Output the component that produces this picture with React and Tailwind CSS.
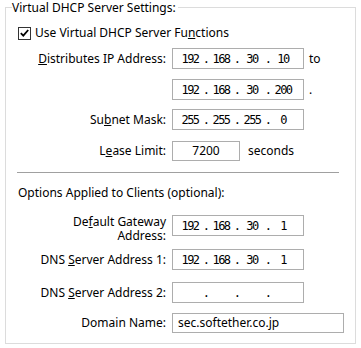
import React from "react";

const font = { fontFamily: '"Noto Sans", "Open Sans", sans-serif' };

const IpBox = ({ parts }) => (
  <div className="flex h-[21px] w-[132px] items-center border border-[#adadad] bg-white pl-[5px] font-['DejaVu_Sans_Mono',monospace] text-[12px] tracking-[-1.5px] text-black">
    {parts.map((p, i) => (
      <React.Fragment key={i}>
        <span className="w-[24px] text-center">{p}</span>
        {i < 3 && <span className="w-[7px] text-center">.</span>}
      </React.Fragment>
    ))}
  </div>
);

const Label = ({ children, className = "" }) => (
  <div className={`w-[160px] text-right leading-[14px] ${className}`}>{children}</div>
);

export default function App() {
  return (
    <div className="h-[348px] w-[361px] bg-white text-[12px] text-black" style={font}>
      <fieldset className="ml-[5px] w-[351px] border border-[#dcdcdc] px-0 pb-[10px]">
        <legend className="ml-[6px] pr-[2px] leading-[15px]">Virtual DHCP Server Settings:</legend>

        <div className="ml-[12px] mt-[11px] flex h-[14px] items-center gap-[4px]">
          <div className="flex h-[13px] w-[13px] items-center justify-center border border-[#333333] bg-white">
            <svg width="9" height="8" viewBox="0 0 9 8">
              <path d="M0.8 4.2 L3.3 6.6 L8.2 1" fill="none" stroke="#000" strokeWidth="1.8" />
            </svg>
          </div>
          <span className="leading-[14px]">
            Use Virtual DHCP Server Fu<u>n</u>ctions
          </span>
        </div>

        <div className="mt-[8px] flex items-center gap-[6px]">
          <Label>
            <u>D</u>istributes IP Address:
          </Label>
          <IpBox parts={["192", "168", "30", "10"]} />
          <span className="ml-[-1px]">to</span>
        </div>

        <div className="mt-[10px] flex items-center gap-[6px]">
          <Label />
          <IpBox parts={["192", "168", "30", "200"]} />
          <span className="ml-[-1px]">.</span>
        </div>

        <div className="mt-[9px] flex items-center gap-[6px]">
          <Label>
            Su<u>b</u>net Mask:
          </Label>
          <IpBox parts={["255", "255", "255", "0"]} />
        </div>

        <div className="mt-[11px] flex items-center gap-[6px]">
          <Label>
            L<u>e</u>ase Limit:
          </Label>
          <div className="flex h-[20px] w-[68px] items-center justify-center border border-[#adadad] bg-white">
            7200
          </div>
          <span className="ml-[2px]">seconds</span>
        </div>

        <div className="ml-[11px] mt-[11px] h-px w-[322px] bg-[#a0a0a0]" />

        <div className="ml-[12px] mt-[13px] leading-[14px]">Options Applied to Clients (optional):</div>

        <div className="mt-[15px] flex items-start gap-[6px]">
          <Label className="leading-[13px]">
            De<u>f</u>ault Gateway
            <br />
            Address:
          </Label>
          <IpBox parts={["192", "168", "30", "1"]} />
        </div>

        <div className="mt-[6px] flex items-center gap-[6px]">
          <Label>
            DNS <u>S</u>erver Address 1:
          </Label>
          <IpBox parts={["192", "168", "30", "1"]} />
        </div>

        <div className="mt-[12px] flex items-center gap-[6px]">
          <Label>
            DNS <u>S</u>erver Address 2:
          </Label>
          <IpBox parts={["", "", "", ""]} />
        </div>

        <div className="mt-[10px] flex items-center gap-[6px]">
          <Label>Domain Name:</Label>
          <div className="flex h-[20px] w-[172px] items-center border border-[#adadad] bg-white pl-[5px]">
            sec.softether.co.jp
          </div>
        </div>
      </fieldset>
    </div>
  );
}
